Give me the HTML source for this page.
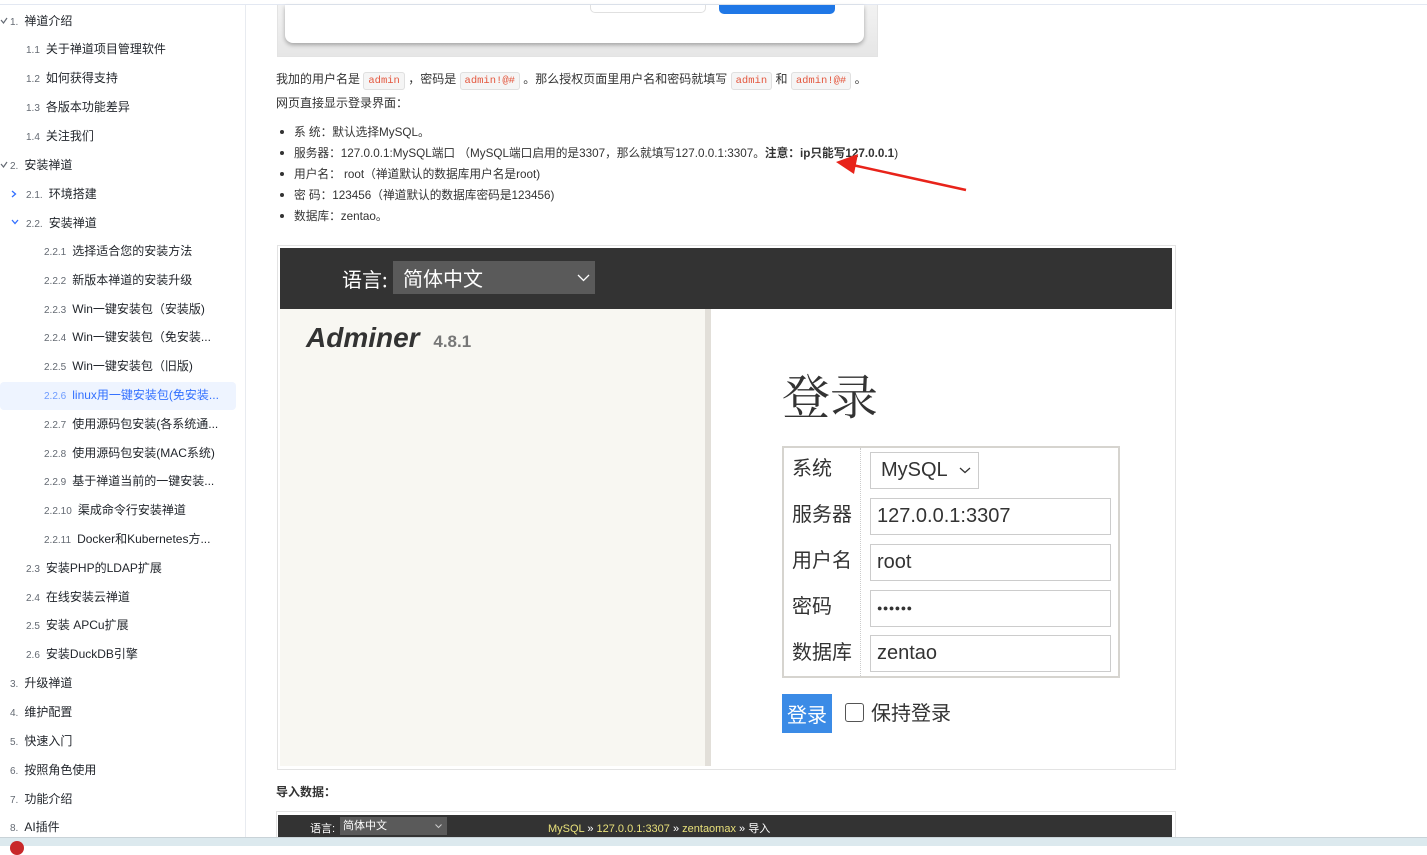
<!DOCTYPE html>
<html><head><meta charset="utf-8"><style>
*{margin:0;padding:0;box-sizing:border-box}
body{width:1427px;height:846px;overflow:hidden;background:#fff;position:relative;font-family:"Liberation Sans","Noto Sans CJK SC",sans-serif;color:#333}
.a{position:absolute;white-space:nowrap}
#top{left:0;top:4px;width:1427px;height:1px;background:#e3e8f2}
#side{left:0;top:5px;width:246px;height:832px;border-right:1px solid #e8ebf0}
.it{position:absolute;font-size:12px;color:#1f2329;line-height:20px;white-space:nowrap}
.it b{font-weight:normal;color:#646a73;font-size:10px;margin-right:6px}
.act{left:0;width:236px;top:382px;height:28px;background:#eef4ff;border-radius:4px;position:absolute}
.t{font-size:12px;color:#333}
code{font-family:"Liberation Mono",monospace;font-size:10.5px;color:#e4573e;background:#f5f5f5;border:1px solid #e0e0e0;border-radius:3px;padding:2px 4px}
.li{position:absolute;left:283px;font-size:11.7px;color:#333;white-space:nowrap}
.li::before{content:"";position:absolute;left:-3px;top:7px;width:4px;height:4px;border-radius:50%;background:#333}
.li span{margin-left:11px}
.lab{position:absolute;left:792px;font-size:20px;color:#333;font-family:"Noto Sans CJK SC",sans-serif}
.inp{position:absolute;left:870px;width:241px;height:37px;border:1px solid #ccc;background:#fff;font-size:20px;color:#333;padding-left:6px;line-height:35px}
svg.c{position:absolute}
</style></head><body>
<div class="a" id="top"></div>
<div class="a" id="side"></div>
<div class="act"></div>
<svg class="c" style="left:0;top:17px" width="8" height="8"><path d="M1 3 L3.5 6 L7 1" stroke="#646a73" fill="none" stroke-width="1.2"/></svg>
<div class="it" style="left:10px;top:11px"><b>1.</b>禅道介绍</div>
<div class="it" style="left:26px;top:39px"><b>1.1</b>关于禅道项目管理软件</div>
<div class="it" style="left:26px;top:68px"><b>1.2</b>如何获得支持</div>
<div class="it" style="left:26px;top:97px"><b>1.3</b>各版本功能差异</div>
<div class="it" style="left:26px;top:126px"><b>1.4</b>关注我们</div>
<svg class="c" style="left:0;top:161px" width="8" height="8"><path d="M1 3 L3.5 6 L7 1" stroke="#646a73" fill="none" stroke-width="1.2"/></svg>
<div class="it" style="left:10px;top:155px"><b>2.</b>安装禅道</div>
<svg class="c" style="left:11px;top:190px" width="6" height="8"><path d="M1 1 L4.5 4 L1 7" stroke="#3370ff" fill="none" stroke-width="1.3"/></svg>
<div class="it" style="left:26px;top:184px"><b>2.1.</b>环境搭建</div>
<svg class="c" style="left:11px;top:219px" width="8" height="6"><path d="M1 1 L4 4.5 L7 1" stroke="#3370ff" fill="none" stroke-width="1.3"/></svg>
<div class="it" style="left:26px;top:213px"><b>2.2.</b>安装禅道</div>
<div class="it" style="left:44px;top:241px"><b>2.2.1</b>选择适合您的安装方法</div>
<div class="it" style="left:44px;top:270px"><b>2.2.2</b>新版本禅道的安装升级</div>
<div class="it" style="left:44px;top:299px"><b>2.2.3</b>Win一键安装包（安装版)</div>
<div class="it" style="left:44px;top:327px"><b>2.2.4</b>Win一键安装包（免安装...</div>
<div class="it" style="left:44px;top:356px"><b>2.2.5</b>Win一键安装包（旧版)</div>
<div class="it" style="left:44px;top:385px;color:#3370ff"><b style="color:#6d9bff">2.2.6</b>linux用一键安装包(免安装...</div>
<div class="it" style="left:44px;top:414px"><b>2.2.7</b>使用源码包安装(各系统通...</div>
<div class="it" style="left:44px;top:443px"><b>2.2.8</b>使用源码包安装(MAC系统)</div>
<div class="it" style="left:44px;top:471px"><b>2.2.9</b>基于禅道当前的一键安装...</div>
<div class="it" style="left:44px;top:500px"><b>2.2.10</b>渠成命令行安装禅道</div>
<div class="it" style="left:44px;top:529px"><b>2.2.11</b>Docker和Kubernetes方...</div>
<div class="it" style="left:26px;top:558px"><b>2.3</b>安装PHP的LDAP扩展</div>
<div class="it" style="left:26px;top:587px"><b>2.4</b>在线安装云禅道</div>
<div class="it" style="left:26px;top:615px"><b>2.5</b>安装 APCu扩展</div>
<div class="it" style="left:26px;top:644px"><b>2.6</b>安装DuckDB引擎</div>
<div class="it" style="left:10px;top:673px"><b>3.</b>升级禅道</div>
<div class="it" style="left:10px;top:702px"><b>4.</b>维护配置</div>
<div class="it" style="left:10px;top:731px"><b>5.</b>快速入门</div>
<div class="it" style="left:10px;top:760px"><b>6.</b>按照角色使用</div>
<div class="it" style="left:10px;top:789px"><b>7.</b>功能介绍</div>
<div class="it" style="left:10px;top:817px"><b>8.</b>AI插件</div>

<div class="a" style="left:277px;top:5px;width:601px;height:52px;border:1px solid #e3e3e3;border-top:none;background:linear-gradient(#f2f2f2,#e6e6e6)"></div>
<div class="a" style="left:285px;top:5px;width:579px;height:38px;background:#fff;border-radius:0 0 8px 8px;box-shadow:0 2px 4px rgba(0,0,0,.3)"></div>
<div class="a" style="left:590px;top:5px;width:116px;height:8px;border:1px solid #e0e0e0;border-top:none;border-radius:0 0 5px 5px"></div>
<div class="a" style="left:719px;top:5px;width:116px;height:9px;background:#1f77e6;border-radius:0 0 5px 5px"></div>

<div class="a t" style="left:276px;top:70px">我加的用户名是 <code>admin</code> ，密码是 <code>admin!@#</code> 。那么授权页面里用户名和密码就填写 <code>admin</code> 和 <code>admin!@#</code> 。</div>
<div class="a t" style="left:276px;top:94px">网页直接显示登录界面：</div>
<div class="li" style="top:123px"><span>系 统：默认选择MySQL。</span></div>
<div class="li" style="top:144px"><span>服务器：127.0.0.1:MySQL端口 （MySQL端口启用的是3307，那么就填写127.0.0.1:3307。<b>注意：ip只能写127.0.0.1</b>)</span></div>
<div class="li" style="top:165px"><span>用户名： root（禅道默认的数据库用户名是root)</span></div>
<div class="li" style="top:186px"><span>密 码：123456（禅道默认的数据库密码是123456)</span></div>
<div class="li" style="top:207px"><span>数据库：zentao。</span></div>
<svg class="a" style="left:830px;top:152px" width="140" height="42"><line x1="136" y1="38" x2="18" y2="12" stroke="#e8231a" stroke-width="2.5"/><polygon points="6,10 28,2 24,22" fill="#e8231a"/></svg>

<div class="a" style="left:277px;top:245px;width:899px;height:525px;border:1px solid #e3e3e3"></div>
<div class="a" style="left:280px;top:248px;width:892px;height:61px;background:#333"></div>
<div class="a" style="left:342px;top:264px;font-size:20px;color:#fff;font-family:'Noto Sans CJK SC',sans-serif">语言:</div>
<div class="a" style="left:393px;top:261px;width:202px;height:33px;background:#5a5a5a;color:#fff;font-size:20px;padding-left:10px;line-height:33px;font-family:'Noto Sans CJK SC',sans-serif">简体中文</div>
<svg class="c" style="left:577px;top:274px" width="13" height="8"><path d="M1 1 L6.5 6.5 L12 1" stroke="#fff" fill="none" stroke-width="1.3"/></svg>
<div class="a" style="left:280px;top:309px;width:425px;height:457px;background:#f8f7f2"></div>
<div class="a" style="left:705px;top:309px;width:6px;height:457px;background:#e2dfd9"></div>
<div class="a" style="left:306px;top:322px;font-size:28px;font-weight:bold;font-style:italic;color:#333">Adminer <span style="font-size:17px;font-style:normal;color:#777;margin-left:6px">4.8.1</span></div>
<div class="a" style="left:782px;top:359px;font-size:48px;color:#333;font-family:'Noto Serif CJK SC',serif">登录</div>
<div class="a" style="left:782px;top:446px;width:338px;height:232px;border:2px solid #d6d4cf;background:#fff"></div>
<div class="a" style="left:860px;top:448px;width:0;height:228px;border-left:1px dotted #ccc"></div>
<div class="lab" style="top:452px">系统</div>
<div class="lab" style="top:498px">服务器</div>
<div class="lab" style="top:544px">用户名</div>
<div class="lab" style="top:590px">密码</div>
<div class="lab" style="top:636px">数据库</div>
<div class="inp" style="top:452px;width:109px;padding-left:10px">MySQL</div>
<svg class="c" style="left:959px;top:467px" width="12" height="7"><path d="M1 1 L6 5.5 L11 1" stroke="#333" fill="none" stroke-width="1.3"/></svg>
<div class="inp" style="top:498px">127.0.0.1:3307</div>
<div class="inp" style="top:544px">root</div>
<div class="inp" style="top:590px;font-size:9px;letter-spacing:0.5px">●●●●●●</div>
<div class="inp" style="top:635px">zentao</div>
<div class="a" style="left:782px;top:694px;width:50px;height:39px;background:#3b8be6;color:#fff;font-size:20px;text-align:center;line-height:39px;font-family:'Noto Sans CJK SC',sans-serif">登录</div>
<div class="a" style="left:845px;top:703px;width:19px;height:19px;border:1.5px solid #555;border-radius:3px"></div>
<div class="a" style="left:871px;top:697px;font-size:20px;color:#333;font-family:'Noto Sans CJK SC',sans-serif">保持登录</div>

<div class="a t" style="left:276px;top:783px;font-weight:bold">导入数据：</div>
<div class="a" style="left:276px;top:811px;width:900px;height:30px;border:1px solid #e3e3e3"></div>
<div class="a" style="left:278px;top:815px;width:894px;height:25px;background:#333"></div>
<div class="a" style="left:310px;top:820px;font-size:11px;color:#fff">语言:</div>
<div class="a" style="left:340px;top:817px;width:107px;height:18px;background:#5a5a5a;color:#fff;font-size:11px;padding-left:3px;line-height:18px">简体中文</div>
<svg class="c" style="left:435px;top:824px" width="7" height="5"><path d="M0.5 0.5 L3.5 3.5 L6.5 0.5" stroke="#ccc" fill="none" stroke-width="1"/></svg>
<div class="a" style="left:548px;top:820px;font-size:11px;color:#e8e07a">MySQL <span style="color:#fff">»</span> 127.0.0.1:3307 <span style="color:#fff">»</span> zentaomax <span style="color:#fff">» 导入</span></div>
<div class="a" style="left:0;top:837px;width:1427px;height:9px;background:#dce9ee;border-top:1px solid #c9d3d8"></div>
<div class="a" style="left:10px;top:841px;width:14px;height:14px;border-radius:50%;background:#c8282a"></div>
</body></html>
